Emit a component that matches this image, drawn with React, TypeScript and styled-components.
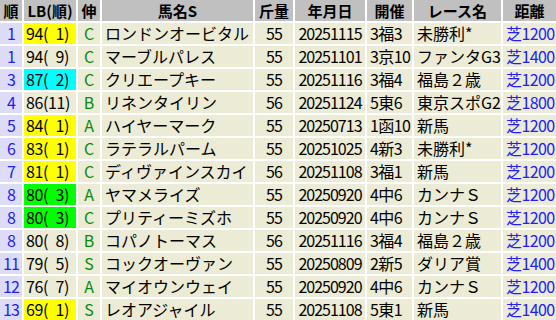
import React from "react";
import styled, { createGlobalStyle } from "styled-components";

type Row = {
  rank: string;
  lb: string;
  lbColor?: string;
  grow: string;
  name: string;
  weight: string;
  date: string;
  meet: string;
  race: string;
  dist: string;
};

// en space keeps the "( 1)" padding as wide as a digit
const sp = "\u2002";

const rows: Row[] = [
  { rank: "1", lb: `94(${sp}1)`, lbColor: "#ffff00", grow: "C", name: "ロンドンオービタル", weight: "55", date: "20251115", meet: "3福3", race: "未勝利*", dist: "芝1200" },
  { rank: "1", lb: `94(${sp}9)`, grow: "C", name: "マーブルパレス", weight: "55", date: "20251101", meet: "3京10", race: "ファンタG3", dist: "芝1400" },
  { rank: "3", lb: `87(${sp}2)`, lbColor: "#00ffff", grow: "C", name: "クリエープキー", weight: "55", date: "20251116", meet: "3福4", race: "福島２歳", dist: "芝1200" },
  { rank: "4", lb: "86(11)", grow: "B", name: "リネンタイリン", weight: "56", date: "20251124", meet: "5東6", race: "東京スポG2", dist: "芝1800" },
  { rank: "5", lb: `84(${sp}1)`, lbColor: "#ffff00", grow: "A", name: "ハイヤーマーク", weight: "55", date: "20250713", meet: "1函10", race: "新馬", dist: "芝1200" },
  { rank: "6", lb: `83(${sp}1)`, lbColor: "#ffff00", grow: "C", name: "ラテラルパーム", weight: "55", date: "20251025", meet: "4新3", race: "未勝利*", dist: "芝1200" },
  { rank: "7", lb: `81(${sp}1)`, lbColor: "#ffff00", grow: "C", name: "ディヴァインスカイ", weight: "56", date: "20251108", meet: "3福1", race: "新馬", dist: "芝1200" },
  { rank: "8", lb: `80(${sp}3)`, lbColor: "#00ff00", grow: "A", name: "ヤマメライズ", weight: "55", date: "20250920", meet: "4中6", race: "カンナＳ", dist: "芝1200" },
  { rank: "8", lb: `80(${sp}3)`, lbColor: "#00ff00", grow: "C", name: "プリティーミズホ", weight: "55", date: "20250920", meet: "4中6", race: "カンナＳ", dist: "芝1200" },
  { rank: "8", lb: `80(${sp}8)`, grow: "B", name: "コパノトーマス", weight: "56", date: "20251116", meet: "3福4", race: "福島２歳", dist: "芝1200" },
  { rank: "11", lb: `79(${sp}5)`, grow: "S", name: "コックオーヴァン", weight: "55", date: "20250809", meet: "2新5", race: "ダリア賞", dist: "芝1400" },
  { rank: "12", lb: `76(${sp}7)`, grow: "A", name: "マイオウンウェイ", weight: "55", date: "20250920", meet: "4中6", race: "カンナＳ", dist: "芝1200" },
  { rank: "13", lb: `69(${sp}1)`, lbColor: "#ffff00", grow: "S", name: "レオアジャイル", weight: "55", date: "20251108", meet: "5東1", race: "新馬", dist: "芝1400" },
];

const headers = ["順", "LB(順)", "伸", "馬名S", "斤量", "年月日", "開催", "レース名", "距離"];

const App = () => {
  return (
    <>
      <GlobalStyle />
      <Table>
        {headers.map((h) => (
          <HeadCell key={h}>{h}</HeadCell>
        ))}
        {rows.map((r, i) => (
          <React.Fragment key={i}>
            <RankCell>{r.rank}</RankCell>
            <LbCell $bg={r.lbColor}>{r.lb}</LbCell>
            <GrowCell>{r.grow}</GrowCell>
            <Cell>{r.name}</Cell>
            <NumCell>{r.weight}</NumCell>
            <NumCell>{r.date}</NumCell>
            <Cell $tight>{r.meet}</Cell>
            <Cell>{r.race}</Cell>
            <DistCell>{r.dist}</DistCell>
          </React.Fragment>
        ))}
      </Table>
    </>
  );
};

export default App;

const GlobalStyle = createGlobalStyle`
  body {
    margin: 0;
    background: #ffffff;
    font-family: "Noto Sans CJK JP", "Noto Sans", sans-serif;
    font-size: 16px;
    color: #000;
  }
`;

const Table = styled.div`
  display: grid;
  grid-template-columns: 22px 52px 22px 151px 38px 70px 45px 87px 1fr;
  grid-auto-rows: 21px;
  gap: 2px;
  width: 556px;
`;

const Cell = styled.div<{ $tight?: boolean }>`
  background: #ecebd5;
  line-height: 21px;
  padding-left: 3px;
  white-space: nowrap;
  letter-spacing: ${(p) => (p.$tight ? "-0.6px" : "0")};
`;

const HeadCell = styled.div`
  background: #c0c0c0;
  display: flex;
  align-items: center;
  justify-content: center;
  font-size: 15px;
  line-height: 1;
  font-weight: bold;
  white-space: nowrap;
  color: #000;
`;

const RankCell = styled.div`
  background: #dcdcf8;
  color: #2222ee;
  line-height: 21px;
  text-align: center;
  letter-spacing: -1px;
`;

const LbCell = styled(Cell)<{ $bg?: string }>`
  background: ${(p) => p.$bg || "#ecebd5"};
  white-space: pre;
  letter-spacing: -0.4px;
  padding-left: 2px;
`;

const GrowCell = styled.div`
  background: #ecebd5;
  color: #0a8a0a;
  line-height: 21px;
  text-align: center;
`;

const NumCell = styled.div`
  background: #ecebd5;
  line-height: 21px;
  text-align: center;
  letter-spacing: -1px;
`;

const DistCell = styled(Cell)`
  color: #2020ff;
  letter-spacing: -0.6px;
`;
